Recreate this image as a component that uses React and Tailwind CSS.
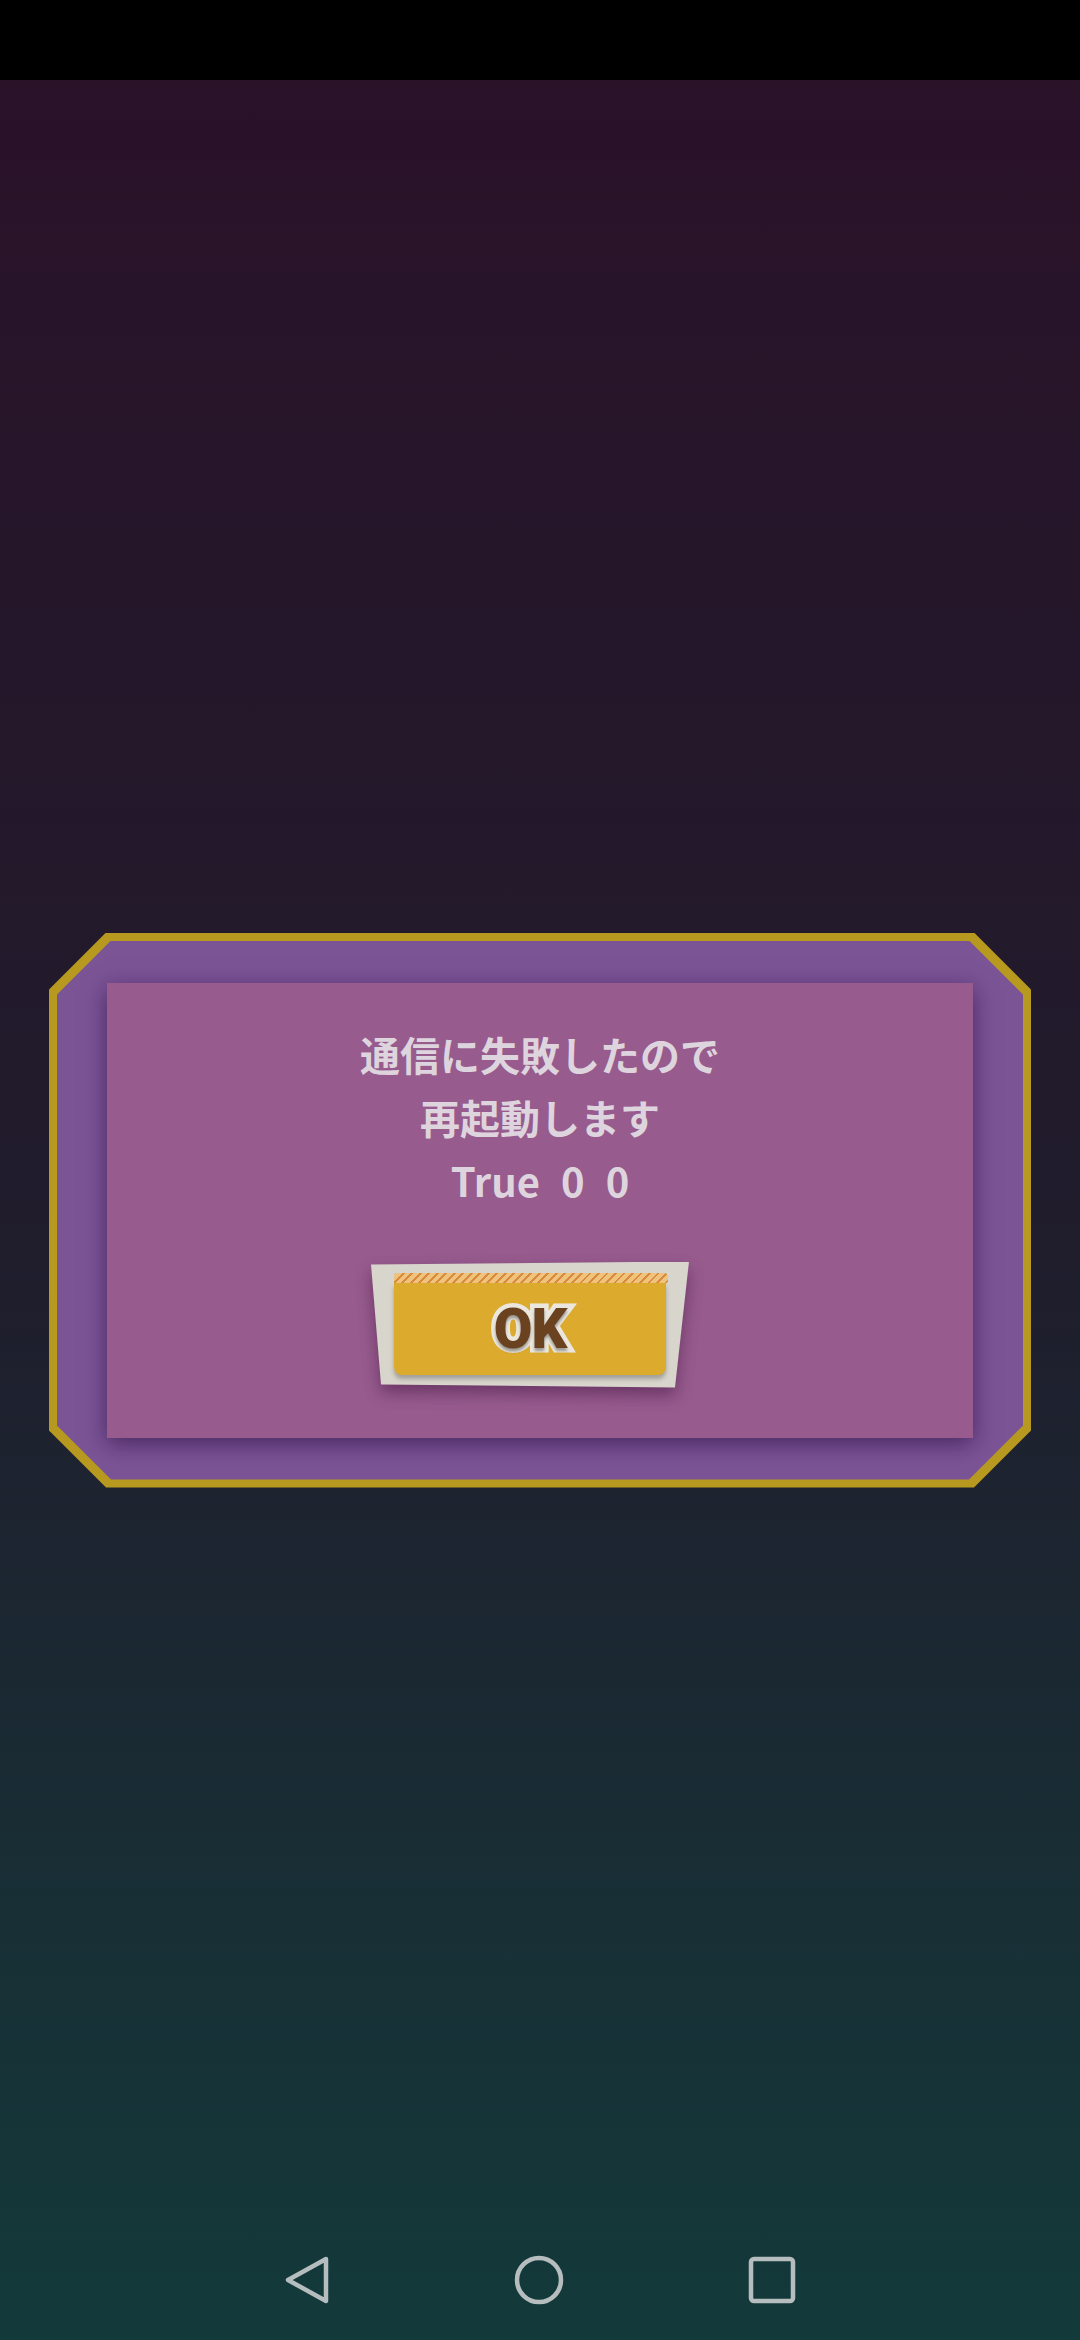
import { useState } from 'react';

const chamferOuter =
    '[clip-path:polygon(57px_0,calc(100%-57px)_0,100%_57px,100%_calc(100%-57px),calc(100%-57px)_100%,57px_100%,0_calc(100%-57px),0_57px)]';

function NavBar() {
    return (
        <nav className="h-[120px] shrink-0 flex items-center justify-center gap-[184px]">
            {/* Back */}
            <svg width="46" height="50" viewBox="0 0 46 50" fill="none">
                <path
                    d="M42 4 L4 25 L42 46 Z"
                    stroke="#b6bdbe"
                    strokeWidth="4.5"
                    strokeLinejoin="round"
                />
            </svg>
            {/* Home */}
            <svg width="50" height="50" viewBox="0 0 50 50" fill="none">
                <circle cx="25" cy="25" r="22" stroke="#b6bdbe" strokeWidth="4.5" />
            </svg>
            {/* Recents */}
            <svg width="48" height="48" viewBox="0 0 48 48" fill="none">
                <rect x="3" y="3" width="42" height="42" rx="3" stroke="#b6bdbe" strokeWidth="4.5" />
            </svg>
        </nav>
    );
}

function OkButton({ onClick }) {
    return (
        <button
            onClick={onClick}
            className="mt-[50px] mr-[20px] drop-shadow-[0_8px_8px_rgba(40,0,40,0.4)]"
        >
            <div className="w-[318px] h-[126px] bg-[#d8d5cc] pt-[11px] pl-[23px] [clip-path:polygon(0_3px,100%_0,calc(100%-14px)_100%,10px_calc(100%-3px))]">
                <div className="w-[274px] h-[10px] rounded-t-[4px] bg-[repeating-linear-gradient(135deg,#d98c3c_0_2px,#efc27e_2px_6px)]" />
                <div className="w-[272px] h-[92px] rounded-b-[8px] bg-[#dcaa2c] shadow-[0_4px_4px_rgba(0,0,0,0.25)] flex items-center justify-center">
                    <span className="font-['Roboto',sans-serif] font-black text-[56px] leading-none tracking-[-1px] text-[#6b421f] [-webkit-text-stroke:9px_#ebe7de] [paint-order:stroke_fill] [text-shadow:0_3px_3px_rgba(0,0,0,0.35)]">
                        OK
                    </span>
                </div>
            </div>
        </button>
    );
}

function ErrorDialog() {
    const [closed, setClosed] = useState(false);

    return (
        <div className={`w-[982px] h-[555px] p-[8px] bg-[#b8991f] ${chamferOuter}`}>
            <div className="w-full h-full bg-[#7b5496] flex items-center justify-center [clip-path:polygon(54px_0,calc(100%-54px)_0,100%_54px,100%_calc(100%-54px),calc(100%-54px)_100%,54px_100%,0_calc(100%-54px),0_54px)]">
                {/* Message panel */}
                <div className="w-[866px] h-[455px] bg-[#975b8e] shadow-[0_6px_22px_rgba(40,10,60,0.6)] flex flex-col items-center pt-[40px]">
                    <div className="text-[40px] leading-[63px] font-bold text-[#ddd4dd] text-center">
                        <p>通信に失敗したので</p>
                        <p>再起動します</p>
                        <p className="[word-spacing:12px]">{closed ? 'False 0 0' : 'True 0 0'}</p>
                    </div>
                    <OkButton onClick={() => setClosed(true)} />
                </div>
            </div>
        </div>
    );
}

export default function App() {
    return (
        <div className="w-[1080px] h-[2340px] flex flex-col font-['Noto_Sans_CJK_JP','Noto_Sans',sans-serif]">
            {/* Status bar */}
            <div className="h-[80px] shrink-0 bg-black" />

            {/* Game view */}
            <div className="flex-1 flex flex-col bg-[linear-gradient(to_bottom,#2a1229_0%,#201c2c_50%,#133a3b_100%)]">
                <main className="flex-1 flex items-center justify-center pt-[120px]">
                    <ErrorDialog />
                </main>
                <NavBar />
            </div>
        </div>
    );
}
